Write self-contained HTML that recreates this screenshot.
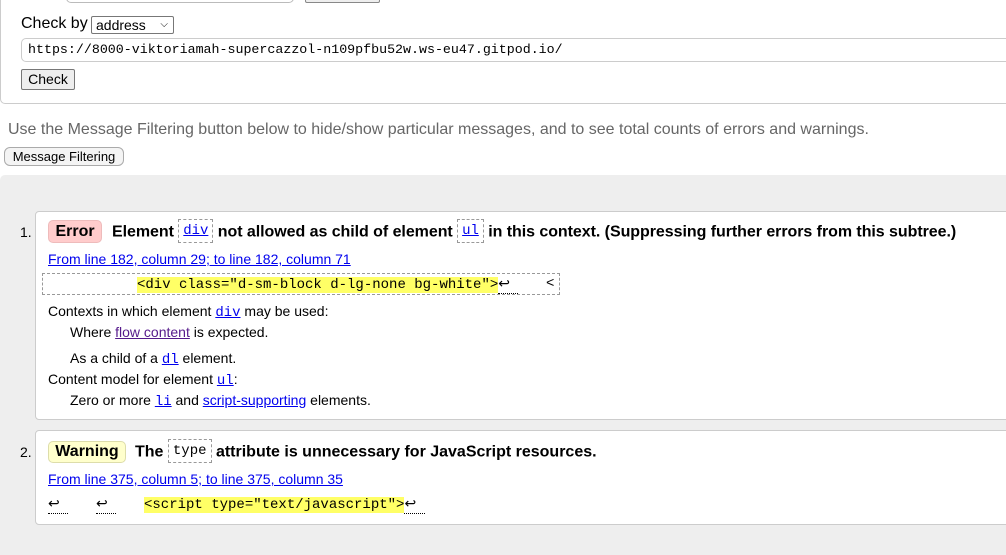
<!DOCTYPE html>
<html><head><meta charset="utf-8"><style>
*{margin:0;padding:0;box-sizing:border-box}
body{width:1006px;height:548px;overflow:hidden;background:#fff;font-family:"Liberation Sans",Arial,sans-serif;color:#000;position:relative}
.a{position:absolute;white-space:nowrap}
.mono{font-family:"Liberation Mono",monospace}
a{color:#00e;text-decoration:underline}
.code{font-family:"Liberation Mono",monospace;font-size:14px}
.hl{background:#ff6}
.box{display:inline-block;border:1px dashed #999;padding:0 4px;line-height:22px;font-weight:normal;font-size:14px;font-family:"Liberation Mono",monospace;vertical-align:middle;margin-top:-3px}
.ret{border-bottom:1px dotted #000}
</style></head><body>
<div class="a" style="left:0;top:-10px;width:1020px;height:114px;border:1px solid #ccc;border-radius:5px"></div>
<div class="a" style="left:66px;top:-10px;width:228px;height:13px;border:1px solid #bbb;border-radius:5px"></div>
<div class="a" style="left:305px;top:-10px;width:75px;height:13px;border:1px solid #888;border-radius:2px;background:#eee"></div>
<div class="a" style="left:21px;top:15px;font-size:16px">Check by</div>
<div class="a" style="left:91px;top:16px;width:83px;height:18px;border:1px solid #777;border-radius:2px;font-size:14px;padding-left:4px;line-height:16px">address<span style="position:absolute;right:5px;top:0;font-size:10px">&#9013;</span></div>
<div class="a mono" style="left:21px;top:38px;width:1000px;height:24px;border:1px solid #ccc;border-radius:5px;font-size:13.3px;line-height:22px;padding-left:6px">https://8000-viktoriamah-supercazzol-n109pfbu52w.ws-eu47.gitpod.io/</div>
<div class="a" style="left:21px;top:69px;width:54px;height:21px;border:1px solid #777;border-radius:2px;background:#eee;font-size:14px;text-align:center;line-height:19px">Check</div>
<div class="a" style="left:8px;top:121px;font-size:16px;color:#666">Use the Message Filtering button below to hide/show particular messages, and to see total counts of errors and warnings.</div>
<div class="a" style="left:4px;top:147px;width:120px;height:19px;border:1px solid #aaa;border-radius:6px;background:#f4f4f4;font-size:13px;text-align:center;line-height:17px">Message Filtering</div>
<div class="a" style="left:0;top:175px;width:1010px;height:380px;background:#eee;border-radius:5px 0 0 0"></div>

<div class="a" style="left:20px;top:224px;font-size:14px">1.</div>
<div class="a" style="left:35px;top:211px;width:980px;height:209px;background:#fff;border:1px solid #ccc;border-radius:4px"></div>
<div class="a" style="left:48px;top:220px;width:54px;height:23px;background:#fcc;border:1px solid #ebb;border-radius:5px;font-size:16px;font-weight:bold;text-align:center;line-height:21px">Error</div>
<div class="a" style="left:112px;top:222px;font-size:16px;font-weight:bold;line-height:20px;letter-spacing:-0.05px">Element <span class="box"><a>div</a></span> not allowed as child of element <span class="box"><a>ul</a></span> in this context. (Suppressing further errors from this subtree.)</div>
<div class="a" style="left:48px;top:251px;font-size:14px"><a>From line 182, column 29; to line 182, column 71</a></div>
<div class="a" style="left:42px;top:273px;width:518px;height:22px;border:1px dashed #999"></div>
<div class="a code" style="left:137px;top:276px"><span class="hl">&lt;div class="d-sm-block d-lg-none bg-white"&gt;</span><span class="ret">&#8617;&nbsp;</span></div>
<div class="a code" style="left:546px;top:276px">&lt;</div>
<div class="a" style="left:48px;top:303px;font-size:14px">Contexts in which element <a class="code">div</a> may be used:</div>
<div class="a" style="left:70px;top:324px;font-size:14px">Where <a style="color:#551a8b">flow content</a> is expected.</div>
<div class="a" style="left:70px;top:350px;font-size:14px">As a child of a <a class="code">dl</a> element.</div>
<div class="a" style="left:48px;top:371px;font-size:14px">Content model for element <a class="code">ul</a>:</div>
<div class="a" style="left:70px;top:392px;font-size:14px">Zero or more <a class="code">li</a> and <a>script-supporting</a> elements.</div>

<div class="a" style="left:20px;top:444px;font-size:14px">2.</div>
<div class="a" style="left:35px;top:430px;width:980px;height:95px;background:#fff;border:1px solid #ccc;border-radius:4px"></div>
<div class="a" style="left:48px;top:441px;width:78px;height:22px;background:#ffc;border:1px solid #dda;border-radius:5px;font-size:16px;font-weight:bold;text-align:center;line-height:20px">Warning</div>
<div class="a" style="left:135px;top:442px;font-size:16px;font-weight:bold;line-height:20px">The <span class="box">type</span> attribute is unnecessary for JavaScript resources.</div>
<div class="a" style="left:48px;top:471px;font-size:14px"><a>From line 375, column 5; to line 375, column 35</a></div>
<div class="a code" style="left:48px;top:496px"><span class="ret">&#8617;&nbsp;</span></div>
<div class="a code" style="left:96px;top:496px"><span class="ret">&#8617;&nbsp;</span></div>
<div class="a code" style="left:144px;top:496px"><span class="hl">&lt;script type="text/javascript"&gt;</span><span class="ret">&#8617;&nbsp;</span></div>
</body></html>
